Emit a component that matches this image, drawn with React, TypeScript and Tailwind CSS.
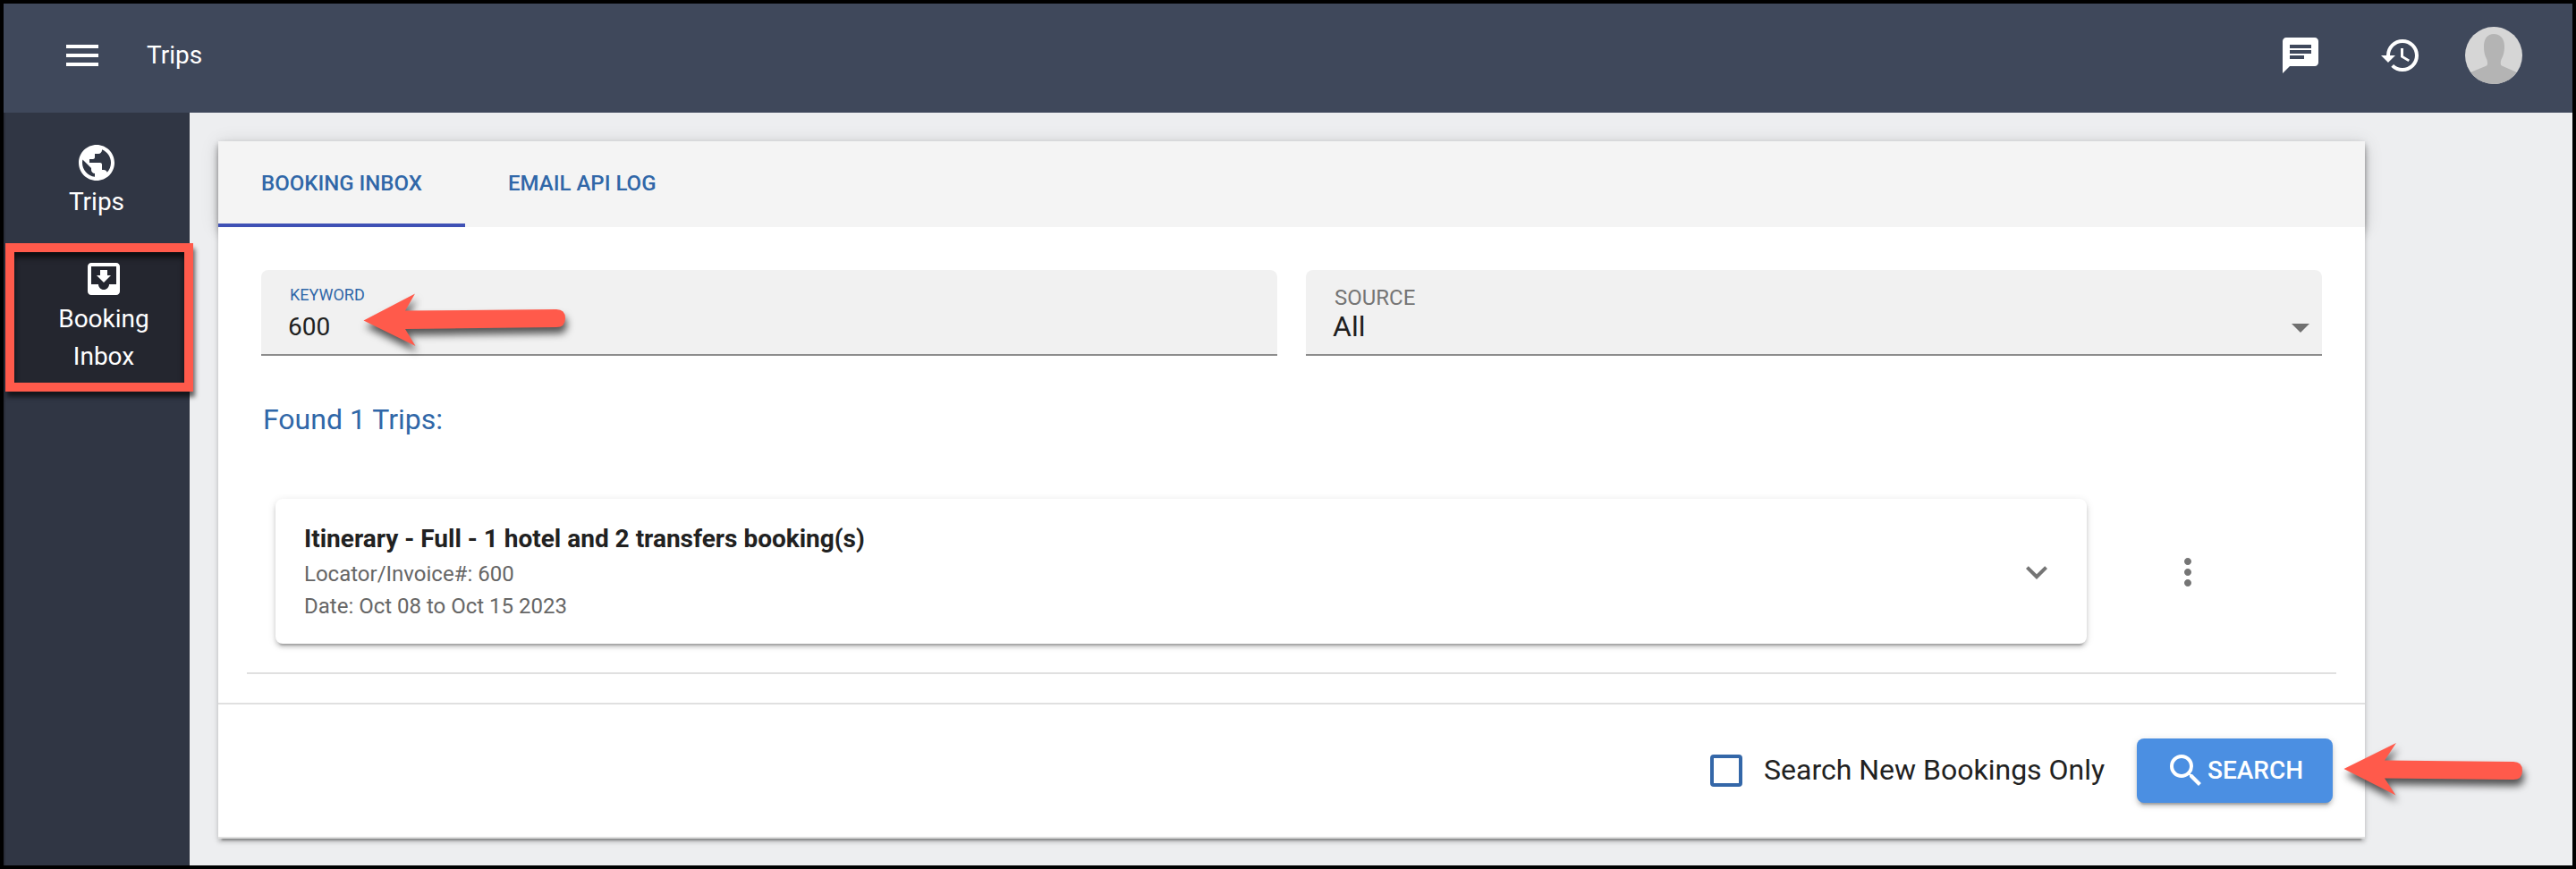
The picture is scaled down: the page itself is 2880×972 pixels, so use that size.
import type { ReactNode } from 'react';
import {
    MdChat,
    MdExpandMore,
    MdHistory,
    MdMenu,
    MdMoreVert,
    MdMoveToInbox,
    MdPublic,
    MdSearch,
} from 'react-icons/md';

const Avatar = () => {
    return (
        <svg viewBox="0 0 64 64" className="size-16 rounded-full bg-[#d6d6d6]">
            <path
                d="M32 8c7.500 0 12 5.500 12 14 0 6-1.200 10-3 13.500-1 2-1.300 3.500-1.200 5.500 0 1.500.5 2.200 1.700 2.700L57 50.500V64H7V50.500l16.500-6.800c1.200-.5 1.500-1.200 1.500-2.700 0-2-.2-3.500-1.200-5.500C22 32 21 28 21 22c0-8.500 4-14 11-14z"
                fill="#b4b4b4"
            />
        </svg>
    );
};

const Header = () => {
    return (
        <header className="flex h-[122px] shrink-0 items-start justify-between bg-[#3f485b] pt-[26px] pr-14 pl-16 text-white">
            <div className="flex h-16 items-center gap-12">
                <MdMenu className="size-12" />
                <h1 className="text-[28px] leading-[42px]">Trips</h1>
            </div>
            <div className="flex h-16 items-center">
                <MdChat className="mr-16 size-12" />
                <MdHistory className="mr-12 size-12" />
                <Avatar />
            </div>
        </header>
    );
};

const Sidebar = () => {
    return (
        <nav className="flex w-[208px] shrink-0 flex-col border-l-2 border-[#292d39] bg-[#303644] text-center text-[28px] leading-[42px] text-white">
            <a className="flex h-[146px] flex-col items-center pt-8 pr-0.5">
                <MdPublic className="size-12" />
                <span className="-mt-px">Trips</span>
            </a>
            <a className="relative z-10 flex h-[166px] w-[210px] flex-col items-center border-10 border-[#ff5a4b] bg-[#24262f] pt-1.5 pl-2.5 shadow-[2px_6px_5px_rgba(0,0,0,0.6),inset_0_6px_6px_rgba(0,0,0,0.65)]">
                <MdMoveToInbox className="size-12 shrink-0" />
                <span>
                    Booking
                    <br />
                    Inbox
                </span>
            </a>
        </nav>
    );
};

const Tabs = () => {
    return (
        <div className="flex h-24 bg-[#f4f4f4] text-[24px] leading-[90px] font-medium text-[#3067a8] shadow-[0_4px_8px_-2px_rgba(0,0,0,0.2),0_8px_10px_rgba(0,0,0,0.14),0_2px_20px_rgba(0,0,0,0.12)]">
            <div className="w-[276px] border-b-4 border-[#3f51b5] pt-0.5 pl-12">BOOKING INBOX</div>
            <div className="pt-0.5 pl-12">EMAIL API LOG</div>
        </div>
    );
};

type FieldProps = {
    children: ReactNode;
};
const Field = ({ children }: FieldProps) => {
    return (
        <div className="relative h-24 flex-1 rounded-t-lg border-b-2 border-[#8c8c8c] bg-[#f1f1f1] px-8">
            {children}
        </div>
    );
};

const Filters = () => {
    return (
        <div className="flex gap-8 px-12 pt-12">
            <Field>
                <p className="pt-4 text-[18px] leading-[23px] text-[#3067a8]">KEYWORD</p>
                <p className="mt-[7px] -ml-0.5 text-[28px] leading-[35px] text-[#212121]">600</p>
            </Field>
            <Field>
                <p className="pt-4 text-[24px] leading-[30px] text-[#757575]">SOURCE</p>
                <p className="-mt-px -ml-0.5 text-[32px] leading-[36px] text-[#1f1f1f]">All</p>
                <span className="absolute top-[60px] right-3.5 border-x-10 border-t-10 border-x-transparent border-t-[#707070]"></span>
            </Field>
        </div>
    );
};

const TripRow = () => {
    return (
        <div className="flex items-center">
            <div className="flex h-[162px] w-[2025px] items-center justify-between rounded-lg bg-white pr-8 pl-8 shadow-[0_6px_2px_-4px_rgba(0,0,0,0.2),0_4px_4px_rgba(0,0,0,0.14),0_2px_10px_rgba(0,0,0,0.12)]">
                <div className="text-[24px] leading-[36px] text-[#666]">
                    <h3 className="text-[28px] leading-[42px] font-bold text-[#212121]">
                        Itinerary - Full - 1 hotel and 2 transfers booking(s)
                    </h3>
                    <p>Locator/Invoice#: 600</p>
                    <p>Date: Oct 08 to Oct 15 2023</p>
                </div>
                <MdExpandMore className="mt-0.5 size-12 text-[#757575]" />
            </div>
            <MdMoreVert className="mt-0.5 ml-[89px] size-12 text-[#757575]" />
        </div>
    );
};

const Footer = () => {
    return (
        <div className="flex h-[152px] items-center justify-end border-y-2 border-[#e0e0e0] pr-9">
            <span className="size-9 rounded-sm border-4 border-[#3467a8]"></span>
            <span className="ml-6 w-[381px] pb-0.5 text-[32px] leading-[40px] whitespace-nowrap text-[#212121]">
                Search New Bookings Only
            </span>
            <button className="ml-9 flex h-[72px] w-[219px] items-center rounded-lg bg-[#4b8fe2] pl-[31px] text-[28px] font-medium text-white shadow-[0_6px_2px_-4px_rgba(0,0,0,0.2),0_4px_4px_rgba(0,0,0,0.14),0_2px_10px_rgba(0,0,0,0.12)]">
                <MdSearch className="size-12" />
                SEARCH
            </button>
        </div>
    );
};

type ArrowProps = {
    className: string;
    d: string;
};
const Arrow = ({ className, d }: ArrowProps) => {
    return (
        <svg
            viewBox="0 0 240 80"
            className={`absolute z-20 h-20 w-60 overflow-visible drop-shadow-[2px_7px_4px_rgba(0,0,0,0.65)] ${className}`}
        >
            <path d={d} fill="#ff5a4b" />
        </svg>
    );
};

const App = () => {
    return (
        <div className="relative flex h-[972px] w-[2880px] flex-col overflow-hidden border-4 border-black bg-[#edeef0] font-[Roboto,sans-serif]">
            <Header />
            <div className="flex flex-1">
                <Sidebar />
                <main className="flex-1 pt-8 pl-8">
                    <section className="h-[780px] w-[2400px] shadow-[0_6px_2px_-4px_rgba(0,0,0,0.3),0_4px_4px_rgba(0,0,0,0.14),0_2px_8px_rgba(0,0,0,0.12)]">
                        <Tabs />
                        <div className="relative bg-white">
                            <Filters />
                            <h2 className="mt-[47px] ml-[50px] text-[32px] leading-[48px] text-[#3067a8]">
                                Found 1 Trips:
                            </h2>
                            <div className="mx-8 mt-[65px] mb-8 border-b-2 border-[#e0e0e0] pb-8 pl-8">
                                <TripRow />
                            </div>
                            <Footer />
                        </div>
                    </section>
                </main>
            </div>
            <Arrow
                className="top-[314px] left-[392px]"
                d="M10.500 40.500 68 10.500 57 29.500 226 28Q236 28 236 38T226 48L57 50 68.500 69z"
            />
            <Arrow
                className="top-[816px] left-[2606px]"
                d="M10.500 40 69 11 56 30.500 200 32Q210 32 210 42T200 52L56 50.500 68.500 69.500z"
            />
        </div>
    );
};

export default App;
